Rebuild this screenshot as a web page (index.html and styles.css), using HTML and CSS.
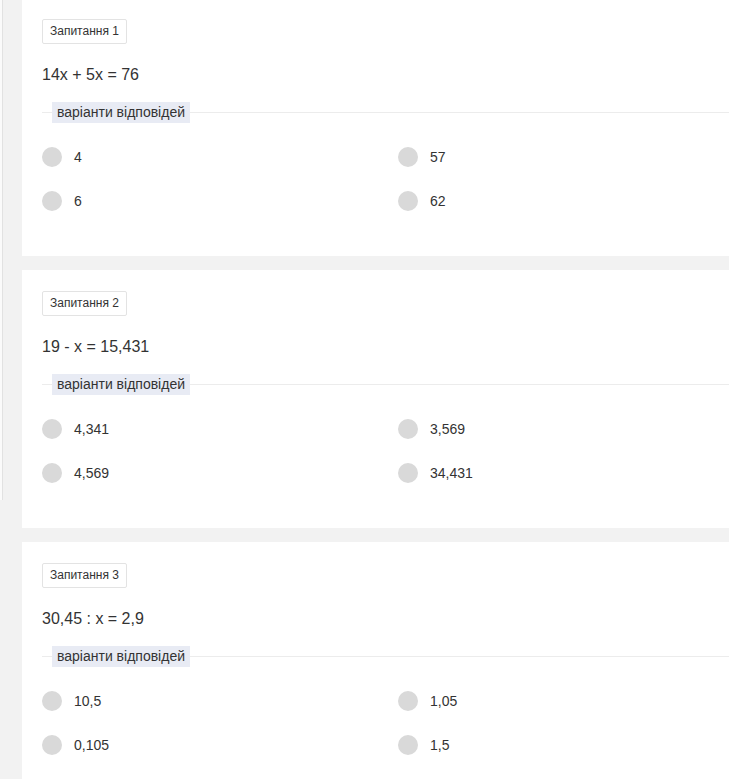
FILE: index.html
```html
<!DOCTYPE html>
<html lang="uk">
<head>
<meta charset="utf-8">
<title>Тест</title>
<link rel="stylesheet" href="styles.css">
</head>
<body>
<div class="page">
  <aside class="side"><div class="side-line"></div></aside>
  <main class="main">
    <section class="card">
      <div class="tag">Запитання 1</div>
      <div class="question">14x + 5x = 76</div>
      <div class="divider"><span class="divider-label">варіанти відповідей</span></div>
      <div class="options">
        <div class="option"><span class="radio"></span><span class="opt-text">4</span></div>
        <div class="option"><span class="radio"></span><span class="opt-text">57</span></div>
        <div class="option"><span class="radio"></span><span class="opt-text">6</span></div>
        <div class="option"><span class="radio"></span><span class="opt-text">62</span></div>
      </div>
    </section>
    <section class="card">
      <div class="tag">Запитання 2</div>
      <div class="question">19 - x = 15,431</div>
      <div class="divider"><span class="divider-label">варіанти відповідей</span></div>
      <div class="options">
        <div class="option"><span class="radio"></span><span class="opt-text">4,341</span></div>
        <div class="option"><span class="radio"></span><span class="opt-text">3,569</span></div>
        <div class="option"><span class="radio"></span><span class="opt-text">4,569</span></div>
        <div class="option"><span class="radio"></span><span class="opt-text">34,431</span></div>
      </div>
    </section>
    <section class="card">
      <div class="tag">Запитання 3</div>
      <div class="question">30,45 : x = 2,9</div>
      <div class="divider"><span class="divider-label">варіанти відповідей</span></div>
      <div class="options">
        <div class="option"><span class="radio"></span><span class="opt-text">10,5</span></div>
        <div class="option"><span class="radio"></span><span class="opt-text">1,05</span></div>
        <div class="option"><span class="radio"></span><span class="opt-text">0,105</span></div>
        <div class="option"><span class="radio"></span><span class="opt-text">1,5</span></div>
      </div>
    </section>
  </main>
</div>
</body>
</html>
```
FILE: styles.css
```css
html, body {
  margin: 0;
  padding: 0;
  background: #f2f2f2;
  font-family: "Liberation Sans", Arial, sans-serif;
  color: #333;
  overflow: hidden;
}
.page {
  display: flex;
  width: 729px;
  height: 779px;
  overflow: hidden;
}
.side {
  width: 22px;
  flex: 0 0 22px;
}
.side-line {
  width: 2px;
  height: 500px;
  background: #fbfbfb;
  border-right: 1px solid #e2e2e2;
}
.main {
  flex: 1 1 auto;
  margin-top: -2px;
  display: flex;
  flex-direction: column;
  gap: 14px;
  min-width: 0;
}
.card {
  flex: 0 0 258px;
  background: #fff;
  height: 258px;
  box-sizing: border-box;
  padding: 21px 0 0 20px;
  width: 760px;
}
.tag {
  display: inline-block;
  box-sizing: border-box;
  height: 25px;
  line-height: 23px;
  padding: 0 7px;
  border: 1px solid #e3e3e3;
  border-radius: 2px;
  font-size: 12px;
  color: #333;
  vertical-align: top;
}
.question {
  margin-top: 21px;
  font-size: 16px;
  line-height: 20px;
  height: 20px;
}
.divider {
  margin-top: 17px;
  height: 21px;
  position: relative;
  display: flex;
  align-items: center;
}
.divider::before {
  content: "";
  position: absolute;
  left: 0;
  right: 0;
  top: 10px;
  height: 1px;
  background: #ececec;
}
.divider-label {
  position: relative;
  margin-left: 10px;
  background: #e8ebf4;
  padding: 0 5px;
  height: 21px;
  line-height: 21px;
  font-size: 14px;
  color: #333;
}
.options {
  margin-top: 24px;
  display: grid;
  grid-template-columns: 356px 1fr;
  row-gap: 24px;
}
.option {
  display: flex;
  align-items: center;
  height: 20px;
}
.radio {
  width: 20px;
  height: 20px;
  border-radius: 50%;
  background: #d9d9d9;
  flex: 0 0 20px;
}
.opt-text {
  margin-left: 12px;
  font-size: 14px;
  color: #333;
}
```
